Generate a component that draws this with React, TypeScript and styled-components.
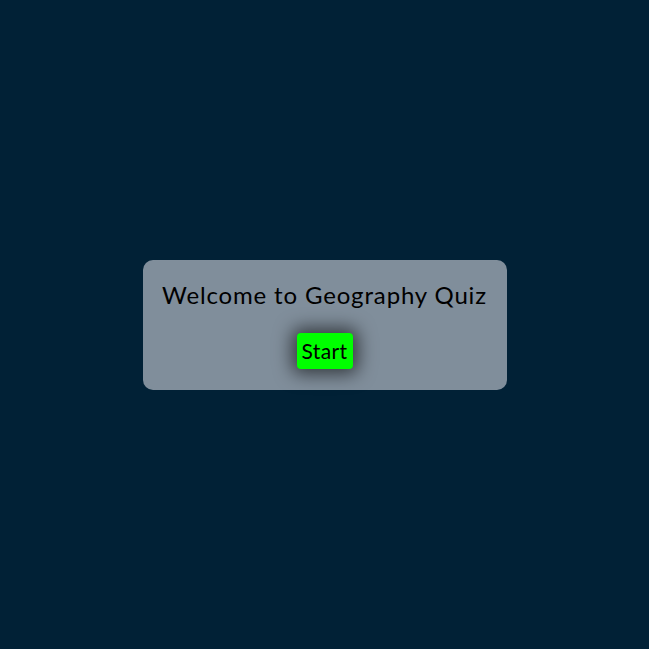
import React from "react";
import styled, { createGlobalStyle } from "styled-components";

const Global = createGlobalStyle`
  html, body { margin: 0; padding: 0; background: #012136; }
  body { font-family: "Lato", "Open Sans", sans-serif; }
`;

const Page = styled.div`
  min-height: 100vh;
  display: flex;
  align-items: center;
  justify-content: center;
`;

const Card = styled.div`
  width: 364px;
  height: 130px;
  box-sizing: border-box;
  background: #808e9b;
  border-radius: 10px;
  display: flex;
  flex-direction: column;
  align-items: center;
  padding-top: 20px;
`;

const Title = styled.h1`
  margin: 0;
  font-size: 24px;
  font-weight: 400;
  line-height: 30px;
  letter-spacing: 0.85px;
  color: #000;
`;

const StartButton = styled.button`
  margin-top: 23px;
  width: 56px;
  height: 36px;
  border: none;
  border-radius: 4px;
  background: #00ff00;
  color: #000;
  font-family: inherit;
  font-size: 21px;
  letter-spacing: 0.4px;
  padding: 0;
  box-shadow: 0 0 18px 5px rgba(0, 0, 0, 0.6);
  cursor: pointer;
`;

export default function App() {
  return (
    <>
      <Global />
      <Page>
        <Card>
          <Title>Welcome to Geography Quiz</Title>
          <StartButton>Start</StartButton>
        </Card>
      </Page>
    </>
  );
}
